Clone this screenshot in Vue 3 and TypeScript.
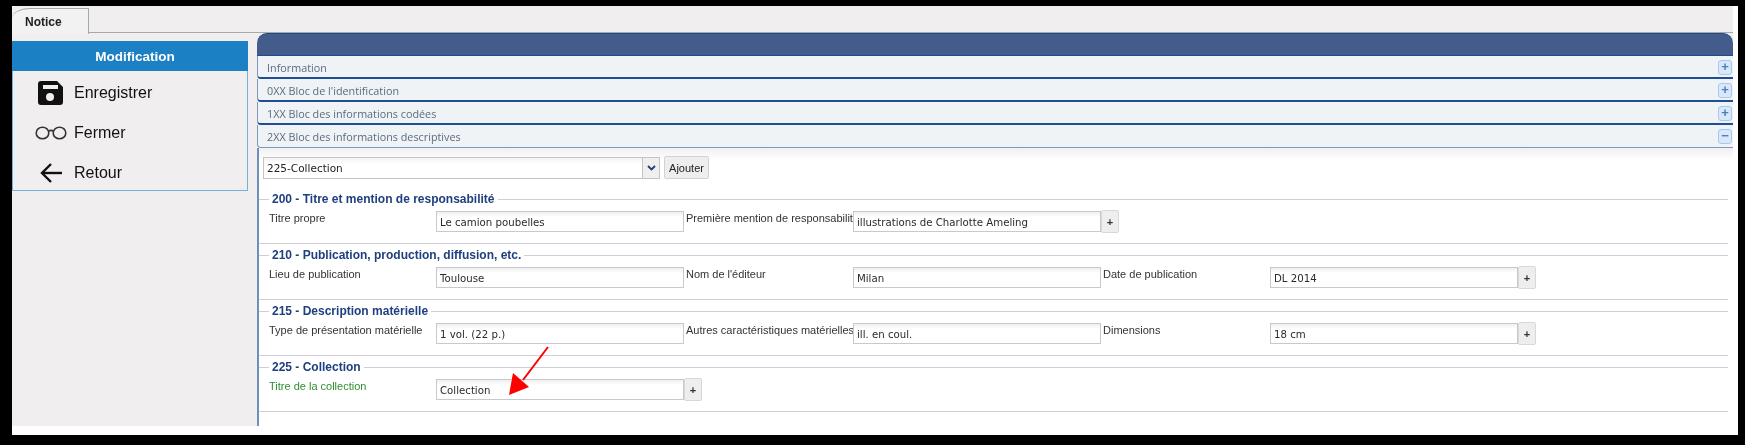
<script setup lang="ts">
interface Field { label: string; value: string; required?: boolean }
interface Group { title: string; fields: Field[] }

const sections: string[] = [
  'Information',
  "0XX Bloc de l'identification",
  '1XX Bloc des informations codées',
  '2XX Bloc des informations descriptives',
]

const groups: Group[] = [
  {
    title: '200 - Titre et mention de responsabilité',
    fields: [
      { label: 'Titre propre', value: 'Le camion poubelles' },
      { label: 'Première mention de responsabilité', value: 'illustrations de Charlotte Ameling' },
    ],
  },
  {
    title: '210 - Publication, production, diffusion, etc.',
    fields: [
      { label: 'Lieu de publication', value: 'Toulouse' },
      { label: "Nom de l'éditeur", value: 'Milan' },
      { label: 'Date de publication', value: 'DL 2014' },
    ],
  },
  {
    title: '215 - Description matérielle',
    fields: [
      { label: 'Type de présentation matérielle', value: '1 vol. (22 p.)' },
      { label: 'Autres caractéristiques matérielles', value: 'ill. en coul.' },
      { label: 'Dimensions', value: '18 cm' },
    ],
  },
  {
    title: '225 - Collection',
    fields: [{ label: 'Titre de la collection', value: 'Collection', required: true }],
  },
]
</script>

<template>
  <div class="screen">
    <div class="app">
      <div class="tabbar">
        <div class="tab">Notice</div>
      </div>
      <div class="body">
        <aside class="side">
          <div class="side-head">Modification</div>
          <div class="side-item first">
            <span class="ico">
              <svg width="26" height="26" viewBox="0 0 26 26">
                <path fill="#111" fill-rule="evenodd" d="M3 1h16l6 6v15a3 3 0 0 1-3 3H3a3 3 0 0 1-3-3V4a3 3 0 0 1 3-3zM5 5v4h15V5zM12 13a4 4 0 1 0 0 8 4 4 0 0 0 0-8z" />
              </svg>
            </span>
            Enregistrer
          </div>
          <div class="side-item">
            <span class="ico">
              <svg width="32" height="14" viewBox="0 0 32 14" fill="none" stroke="#333" stroke-width="1.6">
                <ellipse cx="7.5" cy="7" rx="6.3" ry="5.8" />
                <ellipse cx="24.5" cy="7" rx="6.3" ry="5.8" />
                <path d="M13.5 5.5c1.5-1.3 3.5-1.3 5 0" />
              </svg>
            </span>
            Fermer
          </div>
          <div class="side-item">
            <span class="ico">
              <svg width="24" height="22" viewBox="0 0 24 22" fill="none" stroke="#111" stroke-width="2.4">
                <path d="M23 11H3" />
                <path d="M12 2l-9 9 9 9" />
              </svg>
            </span>
            Retour
          </div>
        </aside>

        <main class="main">
          <div class="main-head"></div>
          <div v-for="(s, i) in sections" :key="s" class="sec" :class="{ open: i === 3 }">
            <span>{{ s }}</span>
            <span class="toggle">{{ i === 3 ? '−' : '+' }}</span>
          </div>
          <div class="content">
            <div class="add-row">
              <div class="select">
                <span class="select-text">225-Collection</span>
                <span class="select-btn">
                  <svg width="9" height="6" viewBox="0 0 9 6" fill="none" stroke="#1d3f78" stroke-width="1.8">
                    <path d="M1 1l3.5 3.5L8 1" />
                  </svg>
                </span>
              </div>
              <button class="add-btn">Ajouter</button>
            </div>

            <fieldset v-for="g in groups" :key="g.title" class="group">
              <legend>{{ g.title }}</legend>
              <div class="fields">
                <template v-for="f in g.fields" :key="f.label">
                  <label class="lbl" :class="{ req: f.required }">{{ f.label }}</label>
                  <div class="inp">{{ f.value }}</div>
                </template>
                <button class="plus">+</button>
              </div>
            </fieldset>
          </div>
        </main>
      </div>
      <svg class="arrow" width="60" height="60" viewBox="0 0 60 60">
        <path d="M50 3L25 36" stroke="#f00" stroke-width="2" fill="none" />
        <path d="M11 51l4-22 16 14z" fill="#f00" />
      </svg>
    </div>
  </div>
</template>

<style>
html, body { margin: 0; background: #000; }
</style>

<style scoped>
.screen {
  box-sizing: border-box;
  width: 1745px;
  height: 445px;
  background: #000;
  padding: 6px 7px 10px 12px;
  overflow: hidden;
}
.app {
  position: relative;
  width: 1726px;
  height: 429px;
  background: linear-gradient(#fff, #fff) right / 5px 100% no-repeat,
    linear-gradient(#fff, #fff) bottom / 100% 9px no-repeat,
    #f0eeef;
  font-family: "Liberation Sans", Arial, sans-serif;
  filter: blur(0.3px);
}
.tabbar {
  height: 27px;
  width: 1721px;
  box-sizing: border-box;
  border-bottom: 1px solid #a8a8a8;
  padding-top: 2px;
}
.tab {
  box-sizing: border-box;
  width: 77px;
  height: 26px;
  background: #f2f2f2;
  border: 1px solid #a8a8a8;
  border-left: 0;
  border-bottom: 0;
  border-top-left-radius: 18px 10px;
  font-size: 12px;
  font-weight: bold;
  color: #222;
  padding: 6px 0 0 13px;
}
.body {
  display: flex;
  gap: 9px;
  width: 1721px;
}
.side {
  box-sizing: border-box;
  width: 236px;
  height: 150px;
  margin-top: 8px;
  border: 1px solid #74b0d8;
  border-top: 0;
  color: #111;
}
.side-head {
  height: 30px;
  margin: 0 -1px;
  padding-left: 10px;
  background: #1c80c4;
  color: #fff;
  font-size: 13.5px;
  font-weight: bold;
  text-align: center;
  line-height: 32px;
}
.side-item {
  display: flex;
  align-items: center;
  height: 40px;
  font-size: 16px;
}
.side-item.first {
  margin-top: 2px;
}
.ico {
  display: flex;
  justify-content: center;
  width: 32px;
  margin: 0 7px 0 22px;
}
.main {
  flex: 1;
  min-width: 0;
}
.main-head {
  height: 23px;
  box-sizing: border-box;
  background: #435c8b;
  border: 1px solid #204a8c;
  border-width: 1px 0 1px 0;
  border-radius: 10px 10px 0 0;
}
.sec {
  position: relative;
  box-sizing: border-box;
  height: 23px;
  background: #eff3f5;
  border-left: 1px solid #7d98c0;
  border-bottom: 2px solid #1f4e94;
  border-radius: 0 0 0 4px;
  padding: 5px 0 0 9px;
  font: 10.8px/14px "Open Sans", sans-serif;
  color: #5b6b80;
}
.sec.open {
  border-bottom: 1px solid #7d98c0;
}
.toggle {
  position: absolute;
  right: 1px;
  top: 4px;
  box-sizing: border-box;
  width: 14px;
  height: 15px;
  background: #d8e8fa;
  border: 1px solid #a9c8ef;
  border-radius: 3px;
  color: #4f7fb8;
  font: bold 13px/12px "Liberation Sans", sans-serif;
  text-align: center;
}
.content {
  box-sizing: border-box;
  height: 278px;
  background: linear-gradient(#f0f0f0, #fff 12px);
  border-left: 2px solid #6f8fbf;
  padding: 9px 5px 0 0;
}
.add-row {
  display: flex;
  align-items: flex-start;
  margin-left: 4px;
  height: 23px;
}
.select {
  display: flex;
  box-sizing: border-box;
  width: 397px;
  height: 22px;
  background: linear-gradient(#f3f3f3, #fff 6px);
  border: 1px solid #c4c4c8;
}
.select-text {
  box-sizing: border-box;
  width: 379px;
  padding: 3px 0 0 3px;
  font: 10.5px/14px "DejaVu Sans", sans-serif;
  color: #222;
  border-right: 1px solid #c4c4c8;
}
.select-btn {
  display: flex;
  flex: 1;
  align-items: center;
  justify-content: center;
  background: #efefef;
}
.add-btn {
  box-sizing: border-box;
  width: 45px;
  height: 23px;
  margin: -1px 0 0 4px;
  padding: 0;
  background: #eeeeee;
  border: 1px solid #d2d2d2;
  border-radius: 2px;
  font: 11px "Liberation Sans", sans-serif;
  color: #222;
}
.group {
  box-sizing: border-box;
  height: 52px;
  margin: 4px 0 0;
  padding: 5px 0 0 10px;
  border: 0;
  border-top: 1.5px solid #cfcfdc;
  border-bottom: 1.5px solid #cfcfdc;
  min-width: 0;
}
.add-row + .group {
  margin-top: 12px;
}
.group legend {
  margin-left: 0;
  padding: 0 3px;
  font: bold 12px/14px "Liberation Sans", sans-serif;
  color: #1f3f7f;
}
.fields {
  display: flex;
  align-items: flex-start;
}
.lbl {
  box-sizing: border-box;
  flex: none;
  width: 167px;
  padding-top: 1px;
  font-size: 11px;
  line-height: 13px;
  color: #333;
  white-space: nowrap;
  overflow: hidden;
}
.lbl + .inp + .lbl {
  margin-left: 2px;
}
.lbl.req {
  color: #2f8f2f;
}
.inp {
  box-sizing: border-box;
  flex: none;
  width: 248px;
  height: 21px;
  background: linear-gradient(#efefef, #fff 5px);
  border: 1px solid #c8c8d0;
  font: 10.2px/21px "DejaVu Sans", sans-serif;
  padding-left: 3px;
  color: #2a2a2a;
}
.plus {
  box-sizing: border-box;
  flex: none;
  width: 18px;
  height: 23px;
  margin-top: -1px;
  padding: 0;
  background: #eeeeee;
  border: 1px solid #d8d8d8;
  border-radius: 2px;
  font: bold 11px "Liberation Sans", sans-serif;
  color: #333;
}
.arrow {
  position: absolute;
  left: 486px;
  top: 338px;
}
</style>
